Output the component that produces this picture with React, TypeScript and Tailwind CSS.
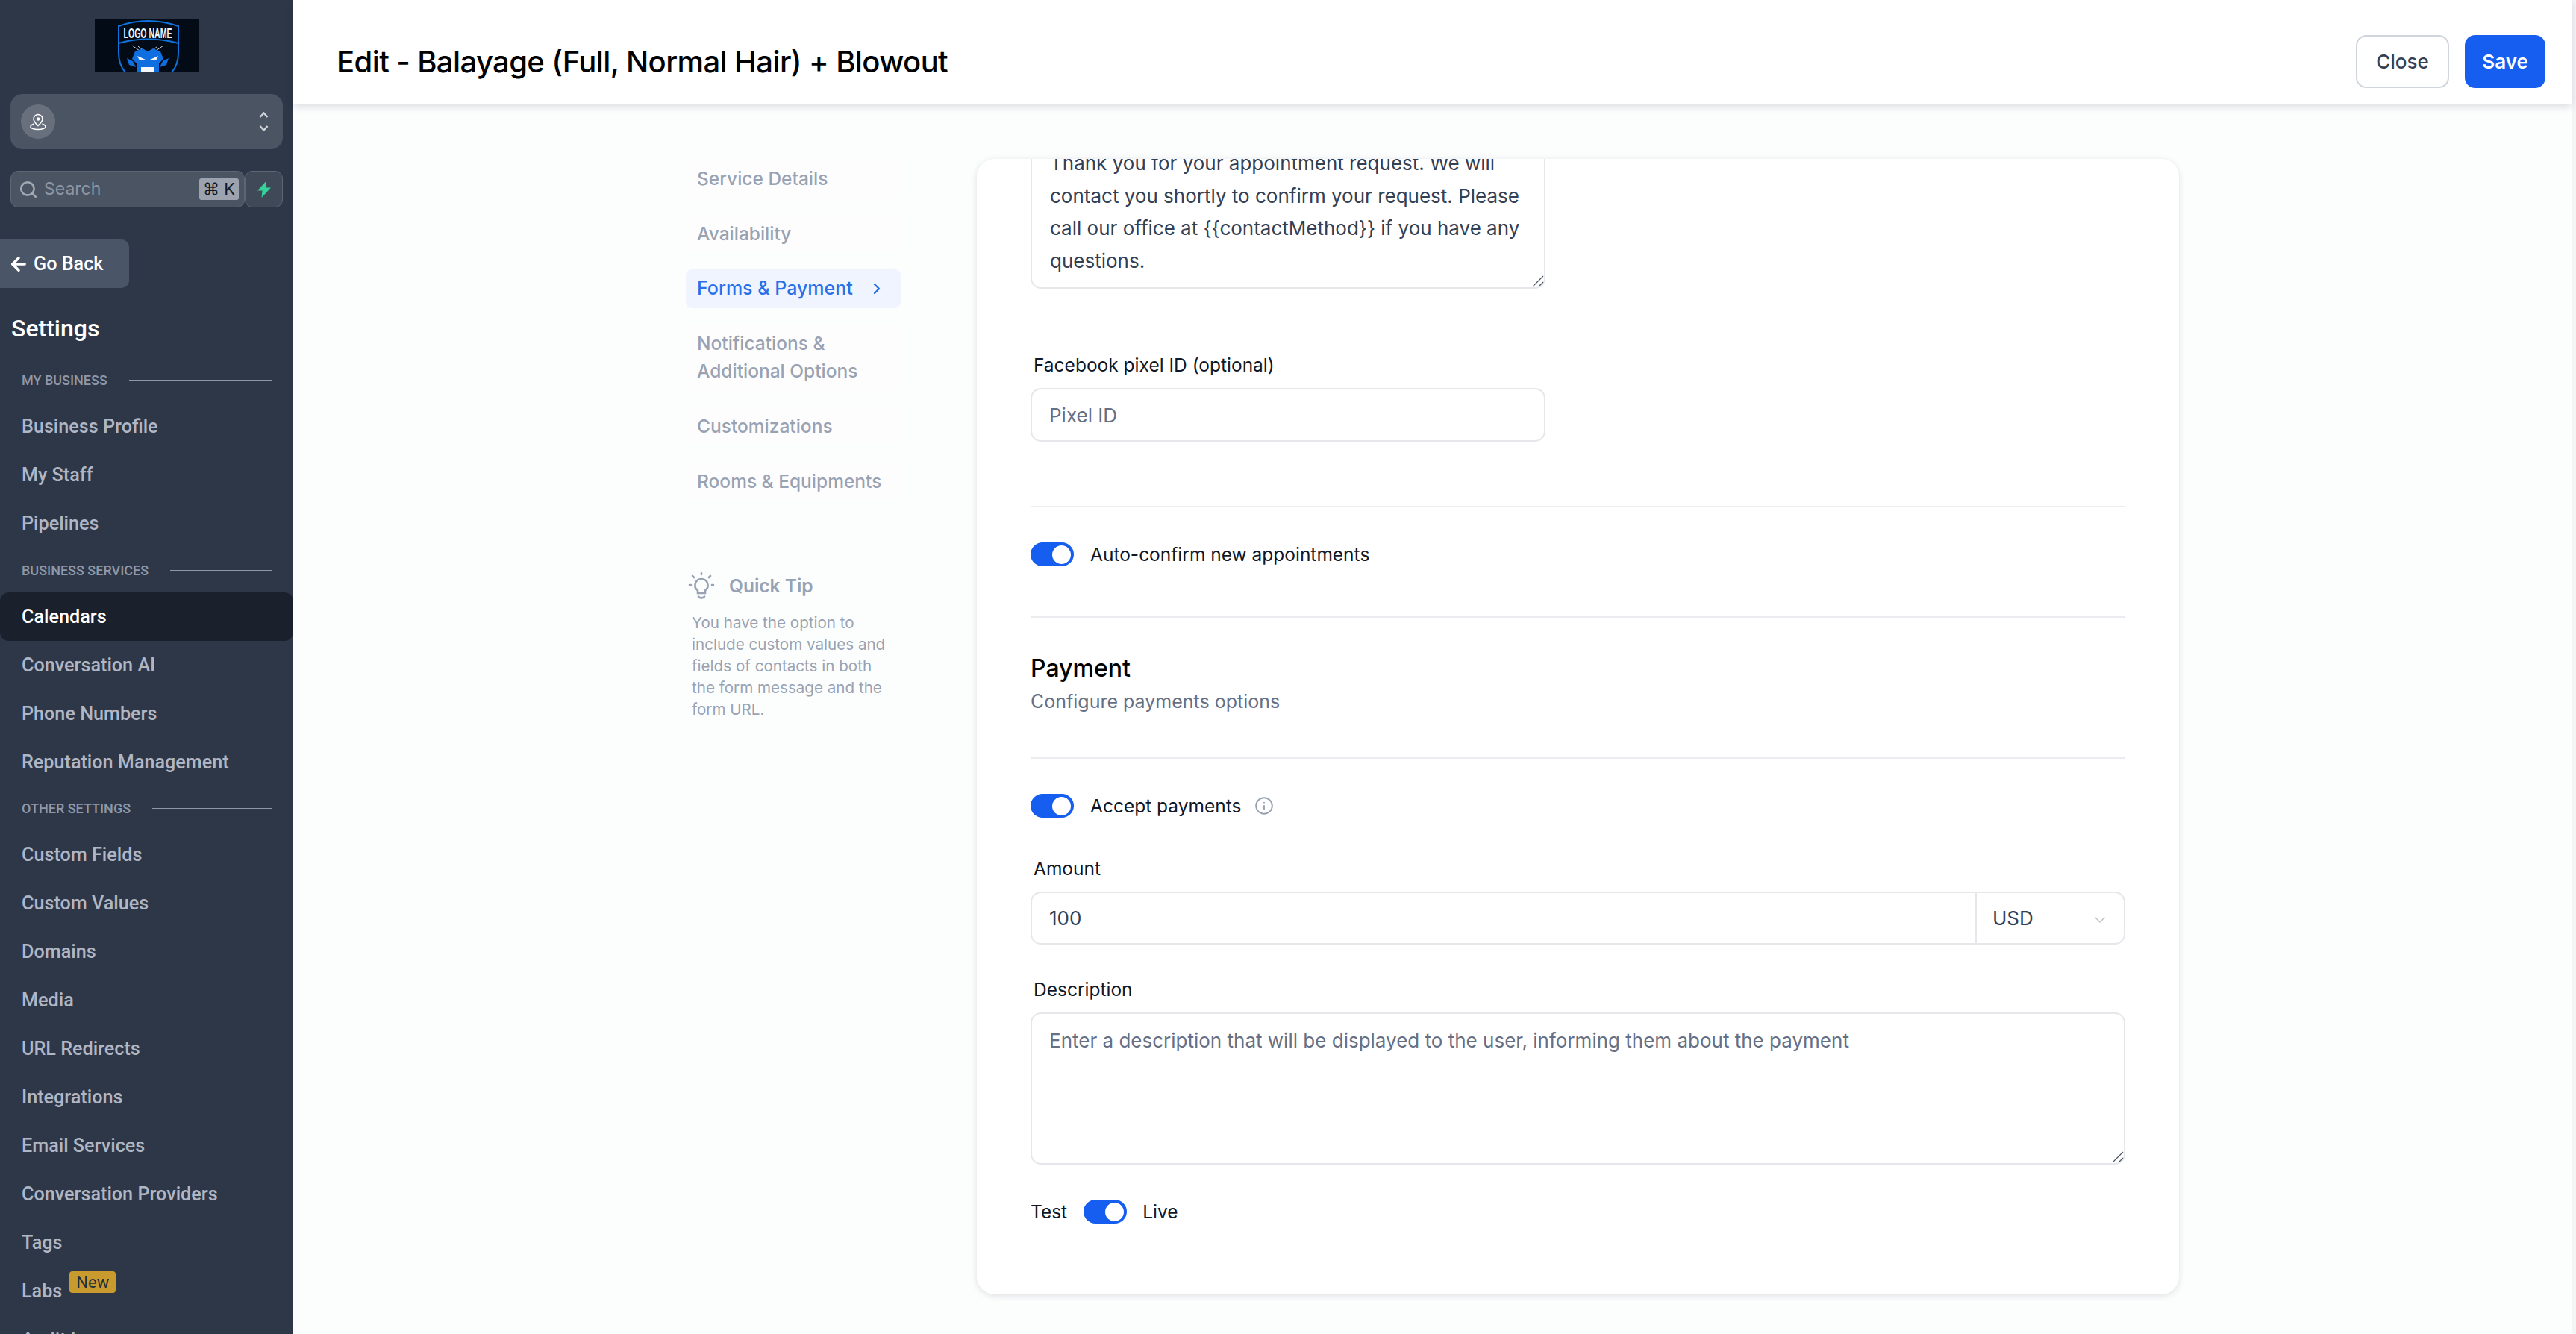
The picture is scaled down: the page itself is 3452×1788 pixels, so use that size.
import { ArrowLeft, ChevronDown, ChevronRight, Info, Search } from "lucide-react";

const myBusiness = ["Business Profile", "My Staff", "Pipelines"];
const businessServices = ["Calendars", "Conversation AI", "Phone Numbers", "Reputation Management"];
const otherSettings = [
  "Custom Fields",
  "Custom Values",
  "Domains",
  "Media",
  "URL Redirects",
  "Integrations",
  "Email Services",
  "Conversation Providers",
  "Tags",
];

const steps = [
  "Service Details",
  "Availability",
  "Forms & Payment",
  "Notifications & Additional Options",
  "Customizations",
  "Rooms & Equipments",
];

const Logo = () => (
  <svg viewBox="0 0 140 72" className="w-[140px] h-[72px] shrink-0">
    <rect width="140" height="72" fill="#020b16" />
    <path d="M32 10 Q71 -4 112 10 V46 Q112 62 103 72 H41 Q32 62 32 46 Z" fill="none" stroke="#0d74e0" strokeWidth="2" />
    <path d="M32 33 Q71 22 112 33" fill="none" stroke="#0d74e0" strokeWidth="2" />
    <text x="71" y="26" textAnchor="middle" fill="#f4f6f8" fontSize="18" fontWeight="700" fontFamily="Liberation Sans, sans-serif" textLength="65" lengthAdjust="spacingAndGlyphs">
      LOGO NAME
    </text>
    <path d="M50 36 L60 43 M92 36 L82 43 M58 37 L64 42 M84 37 L78 42" stroke="#c9d2dc" strokeWidth="1" />
    <path d="M54 44 L64 40 L71 44 L78 40 L88 44 L92 54 L86 60 L86 72 H56 L56 60 L50 54 Z" fill="#0f6fe0" />
    <path d="M43 53 L51 57 L55 65 L46 62 Z M99 53 L91 57 L87 65 L96 62 Z" fill="#0f6fe0" />
    <path d="M57 50 L68 55 L60 56 Z M85 50 L74 55 L82 56 Z" fill="#f5f7fa" />
    <rect x="62" y="65" width="18" height="7" fill="#f5f7fa" />
  </svg>
);

const Toggle = () => (
  <div className="w-[58px] h-[32px] rounded-full bg-[#155eef] flex items-center justify-end pr-[4px] shrink-0">
    <div className="w-[25px] h-[25px] rounded-full bg-white" />
  </div>
);

const ResizeHandle = () => (
  <svg width="16" height="16" viewBox="0 0 16 16" className="absolute right-[2px] bottom-[2px]" stroke="#4b5563" strokeWidth="1.2">
    <path d="M1 15 L15 1 M9 15 L15 9" />
  </svg>
);

const SectionTitle = ({ title }: { title: string }) => (
  <div className="flex items-center h-[24px] pl-[29px] pr-[29px] gap-[29px] my-[18px]">
    <span className="text-[18px] font-medium text-[#8f98a8] whitespace-nowrap">{title}</span>
    <div className="flex-1 h-[1px] bg-[#8f98a8]" />
  </div>
);

const SideItem = ({ label, active }: { label: string; active?: boolean }) => (
  <div
    className={
      active
        ? "h-[65px] flex items-center pl-[29px] text-[25.2px] font-medium text-white bg-[#1a202c] rounded-[12px]"
        : "h-[65px] flex items-center pl-[29px] text-[25.2px] font-medium text-[#b0b6c3]"
    }
  >
    {label}
  </div>
);

const Sidebar = () => (
  <aside className="w-[393px] h-full shrink-0 overflow-hidden bg-[#2d3748] font-['Roboto',sans-serif]">
    <div className="flex justify-center pt-[25px]">
      <Logo />
    </div>

    {/* location switcher */}
    <div className="mx-[14px] mt-[29px] h-[74px] rounded-[16px] bg-[#4a5462] flex items-center pl-[14px] pr-[19px]">
      <div className="w-[46px] h-[46px] rounded-full bg-[#68707d] flex items-center justify-center">
        <svg width="24" height="24" viewBox="0 0 24 24" fill="none" stroke="#ffffff" strokeWidth="1.6">
          <path d="M12 2.5a6 6 0 0 1 6 6c0 3.5-3.5 6.5-6 9-2.500-2.500-6-5.500-6-9a6 6 0 0 1 6-6z" />
          <circle cx="12" cy="8.500" r="1.500" fill="#ffffff" />
          <path d="M6.500 15C3.500 16 2 17.500 2 19c0 2 4.500 3.500 10 3.500S22 21 22 19c0-1.500-1.500-3-4.500-4" />
        </svg>
      </div>
      <svg width="13" height="28" viewBox="0 0 13 28" fill="none" stroke="#d1d5db" strokeWidth="2.4" className="ml-auto">
        <path d="M1.500 8 L6.500 2.500 L11.500 8" />
        <path d="M1.500 20 L6.500 25.500 L11.500 20" />
      </svg>
    </div>

    {/* search */}
    <div className="mx-[14px] mt-[29px] flex h-[49px]">
      <div className="w-[314px] h-full rounded-[10px] border border-[#5d6673] bg-[#4a5462] flex items-center pl-[10px] pr-[7px]">
        <Search className="text-[#a3a9b4]" size={26} strokeWidth={2.4} />
        <span className="ml-[8px] text-[23px] text-[#8f96a3] font-['Inter',sans-serif]">Search</span>
        <span className="ml-auto w-[53px] h-[29px] rounded-[3px] bg-[#9ca3af] flex items-center justify-center text-[22px] text-[#111827] font-['Inter',sans-serif]">
          ⌘ K
        </span>
      </div>
      <div className="w-[51px] h-full rounded-[10px] border border-[#5d6673] bg-[#3f4957] flex items-center justify-center">
        <svg width="20" height="22" viewBox="0 0 20 22" fill="#34d399">
          <path d="M12.500 0 L1 12.500 H7.500 L6.500 22 L19 8.500 H12 Z" />
        </svg>
      </div>
    </div>

    <div className="mt-[43px] w-[173px] h-[65px] rounded-r-[10px] bg-[#4a5568] flex items-center pl-[11px] gap-[6px] text-[25.2px] font-medium text-white">
      <ArrowLeft size={28} strokeWidth={3} />
      Go Back
    </div>

    <div className="mt-[34px] pl-[15px] h-[40px] flex items-center text-[32px] font-medium text-white">Settings</div>

    <div className="mt-[37px]">
      <SectionTitle title="MY BUSINESS" />
    </div>
    {myBusiness.map((name) => (
      <SideItem key={name} label={name} />
    ))}
    <SectionTitle title="BUSINESS SERVICES" />
    {businessServices.map((name) => (
      <SideItem key={name} label={name} active={name === "Calendars"} />
    ))}
    <div className="-mt-[1px]">
      <SectionTitle title="OTHER SETTINGS" />
    </div>
    {otherSettings.map((name) => (
      <SideItem key={name} label={name} />
    ))}
    <div className="h-[65px] flex items-center pl-[29px] text-[25.2px] font-medium text-[#b0b6c3]">
      Labs
      <span className="self-start mt-[6px] ml-[10px] h-[29px] w-[62px] rounded-[4px] bg-[#c99a2e] flex items-center justify-center text-[22px] text-[#1f2e3a] font-normal">
        New
      </span>
    </div>
    <SideItem label="Audit Logs" />
  </aside>
);

const StepsNav = () => (
  <div className="w-[288px] shrink-0">
    <div className="flex flex-col gap-[22px]">
      {steps.map((step) => {
        const active = step === "Forms & Payment";
        return (
          <div
            key={step}
            className={
              active
                ? "min-h-[52px] rounded-[8px] bg-[#eff4ff] flex items-center justify-between pl-[15px] pr-[20px] text-[25px] font-medium text-[#2970e8]"
                : "min-h-[52px] rounded-[8px] bg-[#fdfdfe] flex items-center pl-[15px] pr-[8px] py-[7px] text-[24.5px] leading-[37px] font-medium text-[#98a2b3]"
            }
          >
            {step}
            {active && <ChevronRight size={24} strokeWidth={2.4} />}
          </div>
        );
      })}
    </div>

    <div className="mt-[95px] flex items-center pl-[3px] gap-[19px]">
      <svg width="36" height="38" viewBox="0 0 36 38" fill="none" stroke="#98a2b3" strokeWidth="2.600" strokeLinecap="round">
        <path d="M18 10a8.500 8.500 0 0 0-5 15.400V29h10v-3.600A8.500 8.500 0 0 0 18 10z" />
        <path d="M14 33.500c1 2.500 7 2.500 8 0" />
        <path d="M18 2v2M6 6l2 2M30 6l-2 2M2 18h2M32 18h2" />
      </svg>
      <span className="text-[24.5px] font-semibold text-[#98a2b3]">Quick Tip</span>
    </div>
    <p className="mt-[16px] pl-[8px] pr-[6px] text-[20.6px] leading-[29px] text-[#98a2b3]">
      You have the option to include custom values and fields of contacts in both the form message and the form URL.
    </p>
  </div>
);

const Label = ({ children, className }: { children: string; className: string }) => (
  <div className={`h-[32px] pt-[3px] pl-[4px] flex items-center text-[24.5px] text-[#101828] ${className}`}>{children}</div>
);

const FormCard = () => (
  <div className="ml-[102px] w-[1611px] h-[1522px] shrink-0 overflow-hidden rounded-[24px] bg-white px-[72px] shadow-[0_2px_10px_rgba(16,24,40,0.12)]">
    <div className="relative w-[690px] mt-[-33px]">
      <textarea
        readOnly
        defaultValue="Thank you for your appointment request. We will contact you shortly to confirm your request. Please call our office at {{contactMethod}} if you have any questions."
        className="block w-full h-[207px] px-[24px] pt-[15px] pb-[10px] text-[26px] leading-[43.5px] text-[#344054] bg-white border-2 border-[#e5e7eb] rounded-[14px] outline-none overflow-hidden resize-none"
      />
      <ResizeHandle />
    </div>

    <Label className="mt-[85px]">Facebook pixel ID (optional)</Label>
    <div className="mt-[16px] w-[690px] h-[72px] border-2 border-[#e5e7eb] rounded-[14px] flex items-center px-[23px] text-[26px] text-[#667085]">
      Pixel ID
    </div>

    <div className="mt-[86px] h-[2px] bg-[#eaecf0]" />
    <div className="mt-[47px] flex items-center gap-[22px] h-[32px]">
      <Toggle />
      <span className="text-[24.5px] text-[#101828]">Auto-confirm new appointments</span>
    </div>
    <div className="mt-[67px] h-[2px] bg-[#eaecf0]" />

    <div className="mt-[48px] h-[40px] flex items-center text-[32px] font-medium text-black">Payment</div>
    <div className="mt-[7px] h-[36px] flex items-center text-[25px] text-[#667085]">Configure payments options</div>
    <div className="mt-[56px] h-[2px] bg-[#eaecf0]" />

    <div className="mt-[47px] flex items-center h-[32px]">
      <Toggle />
      <span className="ml-[22px] text-[24.5px] text-[#101828]">Accept payments</span>
      <Info className="ml-[18px] text-[#98a2b3]" size={26} strokeWidth={1.8} />
    </div>

    <Label className="mt-[51px]">Amount</Label>
    <div className="mt-[16px] h-[71px] border-2 border-[#e5e7eb] rounded-[14px] flex text-[26px] text-[#344054]">
      <div className="flex-1 flex items-center px-[23px] border-r-2 border-[#e5e7eb]">100</div>
      <div className="w-[197px] flex items-center pl-[21px] pr-[20px] justify-between">
        USD
        <ChevronDown className="text-[#c4c4c4] mt-[4px]" size={24} strokeWidth={1.6} />
      </div>
    </div>

    <Label className="mt-[43px]">Description</Label>
    <div className="relative mt-[16px]">
      <textarea
        readOnly
        placeholder="Enter a description that will be displayed to the user, informing them about the payment"
        className="block w-full h-[204px] px-[23px] py-[16px] text-[26px] leading-[40px] bg-white border-2 border-[#e5e7eb] rounded-[14px] outline-none resize-none placeholder:text-[#667085]"
      />
      <ResizeHandle />
    </div>

    <div className="mt-[47px] flex items-center h-[32px] text-[24.5px] text-[#101828]">
      Test
      <div className="ml-[22px] mr-[21px]">
        <Toggle />
      </div>
      Live
    </div>
  </div>
);

export default function App() {
  return (
    <div className="flex h-screen overflow-hidden bg-[#fcfdfd] font-['Inter',sans-serif]">
      <Sidebar />
      <main className="flex-1 min-w-0 flex flex-col">
        <header className="h-[140px] shrink-0 bg-white flex items-center pt-[25px] pl-[58px] pr-[35px] shadow-[0_3px_10px_rgba(16,24,40,0.14)] relative">
          <h1 className="text-[40px] font-medium tracking-[-0.6px] text-black">Edit - Balayage (Full, Normal Hair) + Blowout</h1>
          <div className="ml-auto flex gap-[21px]">
            <button className="w-[125px] h-[71px] rounded-[14px] border-2 border-[#d0d5dd] bg-white text-[26px] font-medium text-[#344054]">
              Close
            </button>
            <button className="w-[108px] h-[71px] rounded-[14px] bg-[#155eef] text-[26px] font-semibold text-white">Save</button>
          </div>
        </header>
        <div className="flex pl-[526px] pt-[73px]">
          <StepsNav />
          <FormCard />
        </div>
      </main>
      <div className="w-[6px] h-full shrink-0 bg-[#f3f4f6]" />
    </div>
  );
}
